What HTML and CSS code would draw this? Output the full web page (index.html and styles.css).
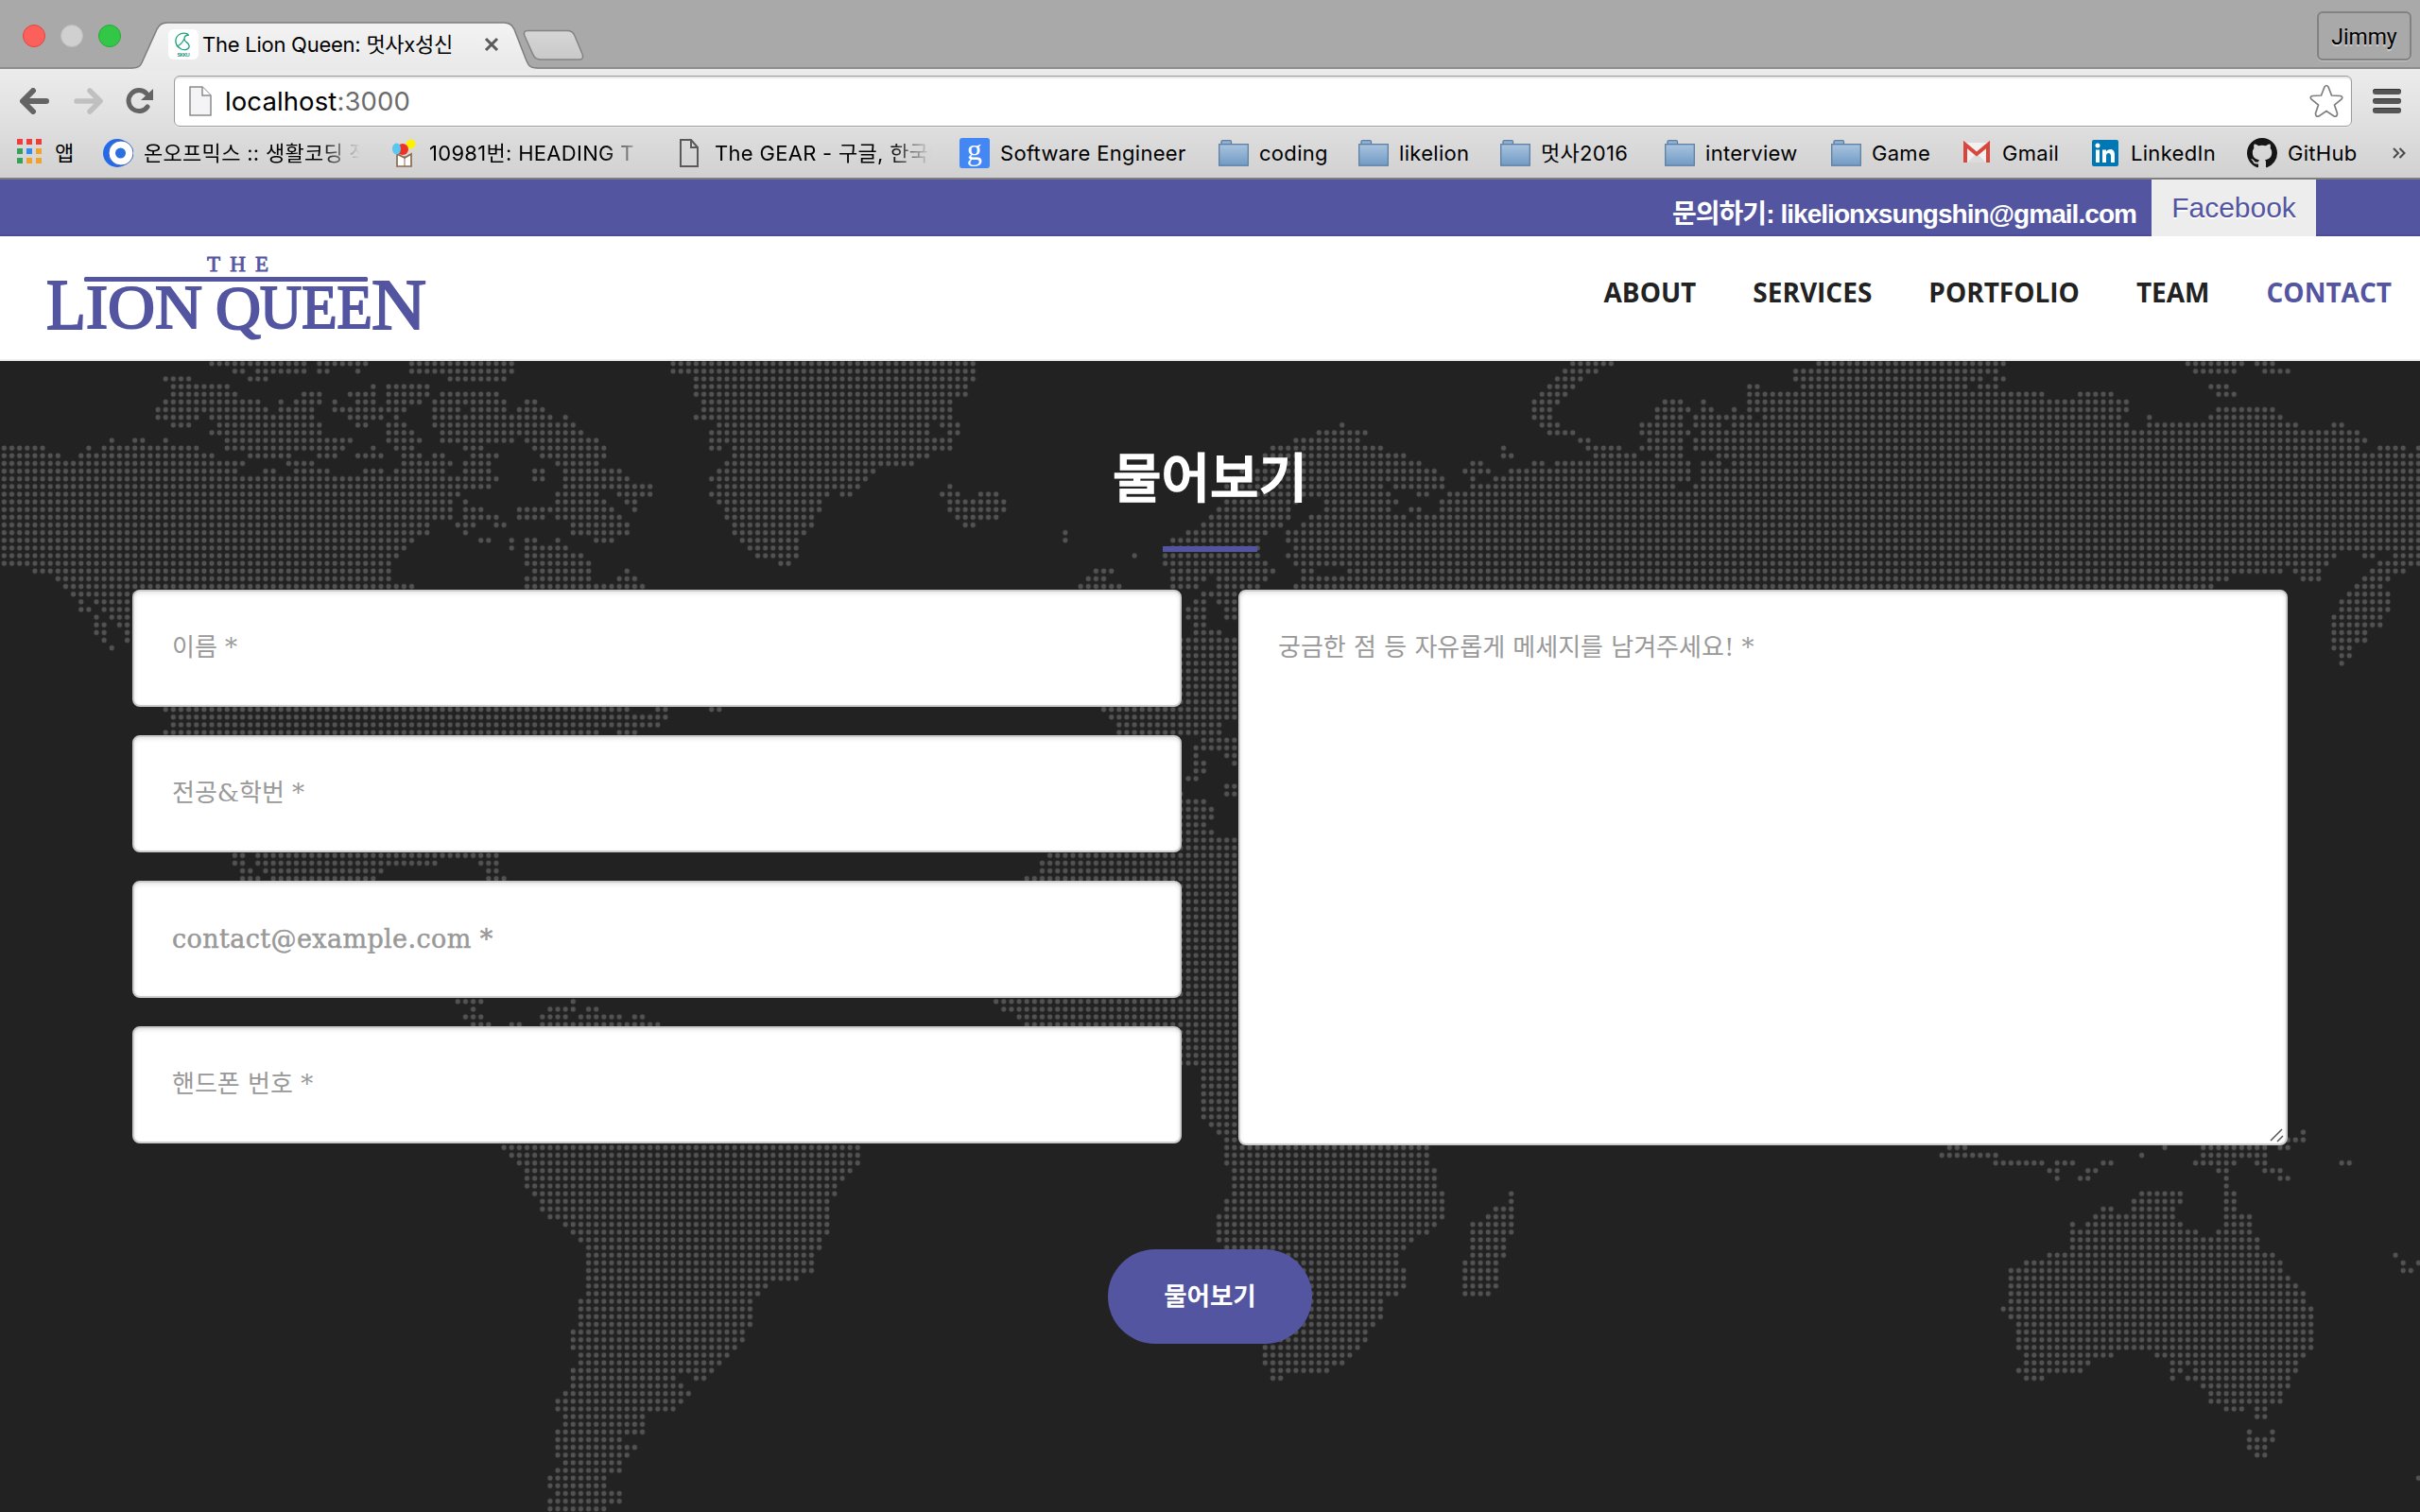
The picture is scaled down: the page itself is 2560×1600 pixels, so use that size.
FILE: index.html
```html
<!DOCTYPE html>
<html lang="ko">
<head>
<meta charset="utf-8">
<title>The Lion Queen: 멋사x성신</title>
<link rel="stylesheet" href="styles.css">
</head>
<body>
<div class="chrome">
  <div class="tabstrip">
    <div class="lights"><i class="light red"></i><i class="light gray"></i><i class="light green"></i></div>
    <div class="tab">
      <svg class="tab-shape" width="480" height="74" viewBox="0 0 480 74">
        <defs>
          <linearGradient id="tabfill" x1="0" y1="0" x2="0" y2="1"><stop offset="0" stop-color="#f3f3f3"/><stop offset="1" stop-color="#e9e9e9"/></linearGradient>
          <linearGradient id="newfill" x1="0" y1="0" x2="0" y2="1"><stop offset="0" stop-color="#d6d6d6"/><stop offset="1" stop-color="#c9c9c9"/></linearGradient>
        </defs>
        <path d="M0 72C8 72 9 69 12 62L26 31Q29 24 37 24H393Q401 24 404 31L416 62C419 69 420 72 428 72V74H0Z" fill="url(#tabfill)"/>
        <path d="M0 72C8 72 9 69 12 62L26 31Q29 24 37 24H393Q401 24 404 31L416 62C419 69 420 72 428 72" fill="none" stroke="#7d7d7d" stroke-width="1.5"/>
        <path d="M418 32.500H460Q466 32.500 468 38L476 57Q478 63 473 63H433Q426 63 424 58L415 38Q413 32.500 418 32.500Z" fill="url(#newfill)" stroke="#838383" stroke-width="1.500"/>
      </svg>
      <div class="tab-content">
        <svg class="favicon" width="32" height="32" viewBox="0 0 32 32"><rect width="32" height="32" rx="6" fill="#fff"/><path d="M21 5C12 2 7 8 8 14c1 5 4 6 6 7 5 2 9-1 8-4-1-4-5-3-5-7 0-3 2-4 5-4M9 18c4-1 6-4 8-8" fill="none" stroke="#1fa37c" stroke-width="1.300"/><text x="16" y="29" text-anchor="middle" textLength="13" class="fav-text">SKKU</text></svg>
        <span class="tab-title">The Lion Queen: 멋사x성신</span>
        <svg width="16" height="16" viewBox="0 0 16 16"><path d="M2 2L14 14M14 2L2 14" stroke="#5a5a5a" stroke-width="3"/></svg>
      </div>
    </div>
    <div class="profile">Jimmy</div>
  </div>

  <div class="toolbar">
    <svg width="32" height="28" viewBox="0 0 32 28"><path d="M28 14H4M14 3L3 14l11 11" fill="none" stroke="#646464" stroke-width="6" stroke-linecap="round" stroke-linejoin="round"/></svg>
    <svg width="32" height="28" viewBox="0 0 32 28"><path d="M4 14H28M18 3l11 11-11 11" fill="none" stroke="#c0c0c0" stroke-width="5.500" stroke-linecap="round" stroke-linejoin="round"/></svg>
    <svg width="30" height="28" viewBox="0 0 30 28"><path d="M23 20A11 11 0 1 1 22 6" fill="none" stroke="#646464" stroke-width="5" stroke-linecap="round"/><path d="M29 1V13H16Z" fill="#646464"/></svg>
    <div class="omnibox">
      <svg width="24" height="32" viewBox="0 0 24 32"><path d="M1 1H14L23 10V31H1Z" fill="#f4f4f6" stroke="#8b8b8b" stroke-width="1.500"/><path d="M14 1V10H23" fill="#fff" stroke="#8b8b8b" stroke-width="1.500"/></svg>
      <span class="url">localhost<span class="port">:3000</span></span>
      <svg class="star" width="36" height="36" viewBox="0 0 36 36"><path d="M16 3Q18 0 20 3L23.500 12 33 12.500Q36 13.500 34 16L26.500 22 29.500 31Q29.500 35 26 34L18 28.500 10 34Q6.500 35 6.500 31L9.500 22 2 16Q0 13.500 3 12.500L12.500 12Z" fill="#fff" stroke="#7f7f7f" stroke-width="1.700"/></svg>
    </div>
    <div class="menu"><i></i><i></i><i></i></div>
  </div>

  <div class="bookmarks">
    <div class="bm"><svg width="32" height="32" viewBox="0 0 32 32"><path d="M3 1h6v6H3zM13 1h6v6h-6zM23 1h6v6h-6z" fill="#f33b3b"/><path d="M3 11h6v6H3zM3 21h6v6H3z" fill="#37a05a"/><path d="M13 11h6v6h-6z" fill="#2e8cf3"/><path d="M23 11h6v6h-6zM13 21h6v6h-6zM23 21h6v6h-6z" fill="#f0a22a"/></svg><span>앱</span></div>
    <div class="bm fade"><svg width="32" height="32" viewBox="0 0 32 32"><circle cx="15" cy="16" r="15" fill="#2469e8"/><circle cx="19" cy="16" r="13" fill="#fff" stroke="#3a66c4"/><circle cx="18.500" cy="16" r="5.500" fill="#2b6fe0"/></svg><span>온오프믹스 :: 생활코딩 작</span></div>
    <div class="bm fade"><svg width="32" height="32" viewBox="0 0 32 32"><path d="M9 17V30H24V17L17 21Z" fill="#fff" stroke="#8b6a4c" stroke-width="1.700"/><path d="M17 19V30" stroke="#8b6a4c"/><circle cx="23.500" cy="6.500" r="5" fill="#fff200"/><circle cx="15" cy="12" r="6" fill="#ee3326"/><ellipse cx="8.500" cy="11.500" rx="4.500" ry="6" fill="#5ac6f2"/></svg><span>10981번: HEADING T</span></div>
    <div class="bm fade"><svg width="32" height="32" viewBox="0 0 32 32"><path d="M7 2H18L25 10V30H7ZM18 2V10H25" fill="none" stroke="#5a5a5a" stroke-width="2"/></svg><span>The GEAR - 구글, 한국어</span></div>
    <div class="bm"><svg width="32" height="32" viewBox="0 0 32 32"><rect width="32" height="32" rx="3" fill="#4387f5"/><text x="16" y="23" text-anchor="middle" class="g-text">g</text></svg><span>Software Engineer</span></div>
    <div class="bm"><svg class="folder" viewBox="0 0 32 28"><use href="#folder"/></svg><span>coding</span></div>
    <div class="bm"><svg class="folder" viewBox="0 0 32 28"><use href="#folder"/></svg><span>likelion</span></div>
    <div class="bm"><svg class="folder" viewBox="0 0 32 28"><use href="#folder"/></svg><span>멋사2016</span></div>
    <div class="bm"><svg class="folder" viewBox="0 0 32 28"><use href="#folder"/></svg><span>interview</span></div>
    <div class="bm"><svg class="folder" viewBox="0 0 32 28"><use href="#folder"/></svg><span>Game</span></div>
    <div class="bm"><svg width="32" height="32" viewBox="0 0 32 32"><path d="M2 5H30V26H2Z" fill="#f1f1f1"/><path d="M6 26L16 16 26 26Z" fill="#dcdcdc"/><path d="M4 26V7L16 17 28 7V26" fill="none" stroke="#d9473c" stroke-width="4"/></svg><span>Gmail</span></div>
    <div class="bm"><svg width="32" height="32" viewBox="0 0 32 32"><rect x="2" y="2" width="28" height="28" rx="2" fill="#0077b5"/><circle cx="8" cy="8" r="2.500" fill="#fff"/><path d="M6 12.500h4V26H6zM13 12.500h4v2c3-4 9-3 9 3V26h-4v-7c0-4-5-4-5 0v7h-4z" fill="#fff"/></svg><span>LinkedIn</span></div>
    <div class="bm"><svg width="32" height="32" viewBox="0 0 16 16"><path fill="#161616" d="M8 0C3.580 0 0 3.580 0 8c0 3.540 2.290 6.530 5.470 7.590.4.070.55-.17.55-.38 0-.19-.01-.82-.01-1.490-2.010.37-2.530-.49-2.690-.94-.09-.23-.48-.94-.82-1.130-.28-.15-.68-.52-.01-.53.63-.01 1.080.58 1.230.82.72 1.210 1.870.87 2.330.66.07-.52.28-.87.51-1.070-1.780-.2-3.640-.89-3.640-3.950 0-.87.31-1.590.82-2.150-.08-.2-.36-1.020.08-2.120 0 0 .67-.21 2.200.82.64-.18 1.320-.27 2-.27s1.360.09 2 .27c1.530-1.040 2.200-.82 2.200-.82.44 1.100.16 1.920.08 2.120.51.56.82 1.270.82 2.150 0 3.070-1.870 3.750-3.650 3.950.29.25.54.73.54 1.480 0 1.070-.01 1.930-.01 2.200 0 .21.15.46.55.38A8.010 8.010 0 0 0 16 8c0-4.420-3.580-8-8-8z"/></svg><span>GitHub</span></div>
    <svg width="14" height="12" viewBox="0 0 14 12"><path d="M1 1l5 5-5 5M7.500 1l5 5-5 5" fill="none" stroke="#4a4a4a" stroke-width="2"/></svg>
  </div>
</div>

<div class="topbar">
  <span class="inquiry">문의하기: likelionxsungshin@gmail.com</span>
  <a class="facebook">Facebook</a>
</div>

<header class="site-header">
  <svg class="logo" width="410" height="100" viewBox="45 265 410 100">
    <text class="the" x="219" y="287" textLength="65">THE</text>
    <rect x="89" y="293" width="300" height="5" rx="1.500"/>
    <text class="big" x="49" y="348" textLength="42" lengthAdjust="spacingAndGlyphs">L</text>
    <text class="mid" x="91" y="347" textLength="123" lengthAdjust="spacingAndGlyphs">ION</text>
    <text class="mid" x="228" y="348" textLength="48" lengthAdjust="spacingAndGlyphs">Q</text>
    <text class="mid" x="275" y="347" textLength="119" lengthAdjust="spacingAndGlyphs">UEE</text>
    <text class="big" x="393" y="348" textLength="58" lengthAdjust="spacingAndGlyphs">N</text>
  </svg>
  <nav><a>ABOUT</a><a>SERVICES</a><a>PORTFOLIO</a><a>TEAM</a><a class="active">CONTACT</a></nav>
</header>

<section class="contact">
  <svg class="map" viewBox="-0.541 -0.332 314.730 149.740" preserveAspectRatio="none">
    <defs><pattern id="dots" x="-.5" y="-.5" width="1" height="1" patternUnits="userSpaceOnUse"><circle cx=".5" cy=".5" r=".32" fill="#525252"/></pattern></defs>
    <path fill="none" stroke="url(#dots)" stroke-width="1" stroke-linecap="square" d="
M27 0H39M41 0H47M53 0H66M87 0H126M204 0H209M236 0H260M284 0H291M293 0H295
M30 1H31M33 1H39M41 1H42M46 1h0M53 1H66M87 1H126M203 1H207M233 1H259M285 1H290M294 1H297
M21 2H24M32 2H34M58 2H65M90 2H126M202 2H205M233 2H257M259 2H260
M22 3H29M48 3h0M50 3H55M90 3H125M201 3H204M227 3H228M234 3H255M257 3H259M287 3H289
M22 4H30M39 4H41M45 4H48M50 4H55M57 4H64M90 4H125M200 4H203M227 4H265M270 4H274M288 4H290
M21 5H33M36 5h0M38 5H41M43 5h0M46 5H48M50 5H54M56 5H65M68 5H69M91 5H123M199 5H202M216 5H218M221 5h0M227 5H276
M20 6H34M36 6H40M43 6H52M56 6H59M61 6H65M67 6H70M91 6H123M199 6H201M215 6H219M221 6H222M225 6h0M227 6H276M288 6H295
M20 7H25M27 7H40M45 7H49M51 7h0M56 7H71M73 7h0M90 7H123M199 7H201M215 7H218M220 7H227M229 7H275M279 7h0M287 7H296
M22 8H24M28 8H41M46 8H47M50 8H52M56 8H74M93 8H120M122 8H124M174 8h0M200 8H202M213 8H218M220 8H223M225 8H276M279 8H298M303 8H304
M27 9H41M50 9H53M57 9H75M92 9H120M123 9H124M171 9H177M201 9H204M213 9H219M221 9H306
M14 10h0M17 10H18M21 10h0M29 10H45M50 10H54M57 10H66M68 10H77M92 10H123M168 10H176M205 10H206M214 10H218M220 10H307
M0 11H5M11 11h0M13 11H25M29 11H44M48 11h0M51 11H53M60 11H62M69 11H78M92 11H93M95 11H123M165 11H179M195 11h0M206 11H210M213 11H218M220 11H306M309 11H312M314 11h0
M0 12H7M10 12H27M32 12H37M41 12H43M46 12H49M52 12H54M56 12H57M61 12H64M70 12H78M95 12H120M164 12H182M195 12H196M207 12H212M215 12H218M223 12H315
M0 13H31M37 13H40M52 13H58M60 13H63M72 13H77M94 13H118M164 13H184M191 13H192M199 13H200M202 13H219M221 13H223M225 13H315
M0 14H30M34 14H35M38 14H42M47 14H49M51 14H57M60 14H63M69 14H70M73 14H80M93 14H113M161 14H186M190 14H193M196 14H219M221 14H315
M0 15H64M69 15H70M73 15H81M92 15H112M160 15H187M191 15h0M194 15H219M221 15H315
M0 16H63M73 16H84M93 16H111M123 16h0M159 16H179M181 16H187M191 16H217M220 16H315
M0 17H59M72 17H77M80 17H84M92 17H107M109 17H110M122 17H124M127 17H129M158 17H180M184 17H185M188 17H315
M0 18H58M60 18h0M72 18H78M81 18H82M93 18H106M123 18H130M159 18H168M172 18H181M187 18H315
M0 19H58M60 19H62M67 19H79M82 19h0M94 19H106M123 19H130M158 19H167M172 19H180M183 19H184M187 19H315
M0 20H58M60 20H64M67 20H70M72 20H80M94 20H105M124 20H129M157 20H167M170 20H182M184 20H315
M0 21H55M59 21H61M64 21H65M74 21H81M95 21H105M125 21H126M156 21H166M169 21H315
M0 22H55M60 22h0M74 22H81M95 22H104M138 22h0M154 22H164M167 22H315
M0 23H53M62 23H63M66 23h0M68 23H69M72 23h0M77 23H79M96 23H103M138 23h0M152 23H163M167 23H315
M0 24H52M66 24h0M68 24H73M97 24H103M152 24H163M168 24H315
M0 25H51M68 25H75M98 25H103M147 25h0M151 25H163M167 25H303M307 25H308M311 25H315
M0 26H50M68 26H76M101 26H102M151 26H164M168 26H302M309 26H315
M4 27H50M69 27H76M81 27h0M142 27H144M152 27H165M169 27H170M175 27H296M298 27H301M308 27H312
M7 28H50M68 28H76M80 28H82M141 28H143M152 28H156M158 28H164M169 28H289M299 28H301M307 28H310
M8 29H53M68 29H83M140 29H145M152 29H155M158 29H163M168 29H287M306 29H309
M9 30H17M156 30H161M305 30H310
M10 31h0M12 31H17M155 31H156M158 31H161M304 31H310
M10 32H11M13 32H17M154 32H156M159 32H161M304 32H310
M12 33h0M14 33H17M154 33H156M159 33H161M303 33H309
M12 34H13M15 34H17M155 34H156M303 34H309
M12 35H13M16 35H17M155 35H158M303 35H307
M13 36h0M16 36h0M153 36H161M303 36H307
M14 37h0M153 37H161M303 37H305
M153 38H161M304 38H305
M153 39H161M304 39h0
M153 40H161M153 41H161M153 42H161M153 43H161M153 44H161
M21 45H81M85 45H86M92 45H93M143 45H161
M22 46H86M144 46H161
M22 47H85M145 47H158
M21 48H77M80 48H82M145 48H158
M156 49H161M155 50H161M155 51h0M159 51H161M155 52H156M160 52h0M155 53H156M154 54H155
M159 55H161M153 56h0M159 56H161M153 57H156M153 58H157M153 59H157M153 60H156M153 61H157M153 62H161M153 63H161
M30 64H31M33 64H64M136 64H161
M30 65H31M33 65H56M62 65H64M135 65H161
M31 66H32M34 66H49M63 66H64M135 66H161
M31 67H33M35 67H48M63 67H65M133 67H161
M153 68H161M153 69H161M153 70H161M153 71H161M153 72H161M153 73H161M153 74H161M153 75H161M153 76H161M153 77H161M153 78H161M153 79H161M153 80H161M153 81H161M153 82H161
M59 83H62M74 83h0M129 83H161
M61 84h0M71 84H74M76 84H77M130 84H161
M60 85H62M70 85H73M75 85H80M82 85H83M132 85H161
M61 86H63M66 86H67M70 86H85M133 86H161
M153 87H161M153 88H161M153 89H161M153 90H161M153 91H161M156 92H161M156 93H161M156 94H161M156 95H161M156 96H161M156 97H161M156 98H161M157 99H161
M158 100H161M299 100h0M159 101H161M297 101H299
M65 102H111M159 102H185M253 102H255M281 102h0M286 102H294M296 102H297
M66 103H111M159 103H185M252 103H259M278 103h0M286 103H294
M67 104H111M159 104H185M259 104H265M267 104H269M273 104H274M285 104H290M293 104H294M304 104H305
M68 105H110M160 105H186M266 105H267M271 105H272M288 105H289M294 105H296
M68 106H109M160 106H186M267 106h0M270 106H271M289 106h0M296 106H297
M68 107H108M160 107H186M289 107h0
M69 108H108M160 108H187M196 108h0M278 108H283M289 108H290
M70 109H107M159 109H187M196 109h0M277 109H283M289 109H290
M70 110H107M159 110H187M194 110H196M273 110H274M277 110H282M289 110H290
M71 111H107M158 111H187M193 111H196M272 111H282M289 111H292
M73 112H107M158 112H186M191 112H196M269 112h0M271 112H283M289 112H292
M74 113H107M158 113H185M191 113H196M269 113H285M288 113H292
M75 114H106M158 114H183M191 114H195M269 114H293
M76 115H106M159 115H182M191 115H195M269 115H293
M76 116H105M162 116H181M191 116H195M266 116H295M311 116h0
M76 117H105M162 117H181M190 117H194M263 117H296M312 117h0M314 117h0
M76 118H105M162 118H182M190 118H194M261 118H296M312 118H313
M76 119H103M162 119H182M190 119H194M261 119H297
M76 120H99M162 120H182M190 120H194M261 120H298
M76 121H98M162 121H181M190 121H193M261 121H299
M75 122H97M162 122H179M261 122H299
M75 123H97M162 123H179M260 123H300
M75 124H97M162 124H179M261 124H300
M75 125H97M163 125H178M262 125H300
M74 126H96M163 126H177M262 126H300
M74 127H96M163 127H177M262 127H300
M74 128H95M164 128H176M262 128H300
M75 129H94M164 129H175M263 129H274M280 129H299
M75 130H93M164 130H174M263 130H271M282 130H298
M74 131H92M165 131H172M262 131H270M282 131H283M285 131H298
M74 132H87M90 132H91M165 132H166M263 132H265M282 132h0M284 132H297
M74 133H88M286 133H297M73 134H89M287 134H296M72 135H88M287 135H296
M72 136H87M289 136H291M293 136H294M73 137H83M293 137H294M73 138H83
M72 139H83M292 139h0M295 139h0M72 140H80M292 140H295M72 141H82M292 141H294M72 142H81M293 142H294
M73 143H80M72 144H80M71 145H78M314 145h0M71 146H78M72 147H80M71 148H80M71 149H78"/>
  </svg>
  <div class="contact-body">
    <h2>물어보기</h2>
    <div class="rule"></div>
    <form>
      <div class="fields">
        <input placeholder="이름 *">
        <input placeholder="전공&amp;학번 *">
        <input class="latin" placeholder="contact@example.com *">
        <input placeholder="핸드폰 번호 *">
      </div>
      <div class="message">
        <textarea placeholder="궁금한 점 등 자유롭게 메세지를 남겨주세요! *"></textarea>
        <svg class="grip" width="16" height="16" viewBox="0 0 16 16"><path d="M1 14L13 2M8 15L14 9" stroke="#555" stroke-width="1.500"/></svg>
      </div>
      <button type="button">물어보기</button>
    </form>
  </div>
</section>

<svg width="0" height="0" class="defs">
  <defs>
    <linearGradient id="ff" x1="0" y1="0" x2="0" y2="1"><stop offset="0" stop-color="#a9c4df"/><stop offset="1" stop-color="#719ac4"/></linearGradient>
    <g id="folder"><path d="M3 5V2Q3 .7 4.500.7H12Q13.500.7 13.500 2V5" fill="#8fb0d2" stroke="#5d7fa3" stroke-width="1.300"/><rect x=".7" y="4.700" width="30.600" height="22.500" fill="url(#ff)" stroke="#5d7fa3" stroke-width="1.300"/></g>
  </defs>
</svg>
</body>
</html>
```
FILE: styles.css
```css
* { box-sizing: border-box; }
body {
  margin: 0;
  width: 2560px;
  height: 1600px;
  overflow: hidden;
  background: #222;
  font-family: "Liberation Sans", "Noto Sans CJK KR", sans-serif;
}
svg { display: block; flex: none; }
.defs { position: absolute; }

/* browser window */
.chrome {
  height: 190px;
  font-family: Inter, "Noto Sans CJK KR", sans-serif;
  background: linear-gradient(#ececec 72px, #e2e2e2 120px, #d1d1d1 188px);
  border-bottom: 2px solid #7e7e7e;
}
.tabstrip {
  height: 73px;
  display: flex;
  align-items: flex-start;
  background: #a9a9a9;
  border-bottom: 2px solid #8d8d8d;
}
.lights { display: flex; gap: 16px; padding: 26px 0 0 24px; width: 140px; }
.light { width: 24px; height: 24px; border-radius: 50%; }
.red { background: #fc605b; border: 1px solid #e2453f; }
.gray { background: #d0d0d0; border: 1px solid #bdbdbd; }
.green { background: #33c748; border: 1px solid #27a936; }
.tab { position: relative; width: 480px; height: 73px; }
.tab-shape { position: absolute; left: 0; top: 0; }
.tab-content {
  position: relative;
  display: flex;
  align-items: center;
  padding: 31px 0 0 38px;
}
.tab-title { margin-left: 4px; width: 298px; height: 32px; font-size: 22px; line-height: 33px; white-space: nowrap; letter-spacing: -.25px; }
.fav-text { font: bold 5px "Liberation Sans", sans-serif; fill: #1b8d78; }
.profile {
  margin: 12px 9px 0 auto;
  width: 100px;
  height: 52px;
  border: 2px solid #828282;
  border-radius: 6px;
  box-shadow: 0 1px 1px #c4c4c4;
  font: 23px/51px Roboto, sans-serif;
  text-align: center;
  text-shadow: 0 2px 1px #d0d0d0;
}
.toolbar { display: flex; align-items: center; height: 68px; padding: 0 0 0 21px; }
.toolbar > svg { margin-right: 24px; }
.toolbar > svg:nth-child(3) { margin-right: 21px; }
.omnibox {
  display: flex;
  align-items: center;
  width: 2304px;
  height: 54px;
  padding: 0 8px 0 15px;
  background: #fff;
  border: 1.500px solid #9c9c9c;
  border-radius: 6px;
  box-shadow: inset 0 2px 1px #e6e6e6, 0 1px 0 #eee;
}
.url { margin-left: 14px; font-size: 27.500px; letter-spacing: .1px; }
.port { color: #6b6b6b; }
.star { margin-left: auto; }
.menu { display: flex; flex-direction: column; gap: 4px; margin-left: 22px; }
.menu i { width: 30px; height: 6px; border-radius: 3px; background: #555; box-shadow: inset 0 1px #333; }
.bookmarks { display: flex; align-items: center; height: 42px; padding-left: 15px; font-size: 22px; letter-spacing: .3px; }
.bm { display: flex; align-items: center; gap: 11px; width: 154px; white-space: nowrap; }
.bm:nth-child(1) { width: 94px; }
.bm:nth-child(-n+4):nth-child(n+2) { width: 302px; }
.bm:nth-child(5) { width: 274px; }
.bm:nth-child(6) { width: 148px; }
.bm:nth-child(7) { width: 150px; }
.bm:nth-child(8) { width: 174px; }
.bm:nth-child(9) { width: 176px; }
.bm:nth-child(10) { width: 138px; }
.bm:nth-child(11) { width: 136px; }
.bm:nth-child(12) { width: 166px; }
.bm span { line-height: 34px; }
.fade span {
  width: 229px;
  overflow: hidden;
  -webkit-mask-image: linear-gradient(90deg, #000 185px, transparent 229px);
  mask-image: linear-gradient(90deg, #000 185px, transparent 229px);
}
.folder { width: 32px; height: 28px; }
.g-text { font: 32px "Liberation Serif", serif; fill: #fff; }

/* site */
.topbar {
  display: flex;
  justify-content: flex-end;
  height: 60px;
  padding-right: 110px;
  background: #5355a0;
  box-shadow: inset 0 -2px #4c4c98;
}
.inquiry { margin-right: 16px; color: #fff; font-size: 28px; font-weight: bold; line-height: 73px; letter-spacing: -.95px; white-space: nowrap; }
.facebook { width: 174px; background: #ededed; color: #5355a0; font-size: 30px; line-height: 59px; text-align: center; text-shadow: 0 2px 1px #fff; }
.site-header {
  display: flex;
  justify-content: space-between;
  height: 132px;
  padding: 15px 30px 0 45px;
  background: #fff;
  border-bottom: 2px solid #ededed;
}
.logo { fill: #5355a0; font-family: "Liberation Serif", serif; }
.the { font-size: 23px; stroke: #5355a0; stroke-width: .8px; }
.mid { font-size: 65px; stroke: #5355a0; stroke-width: 2px; }
.big { font-size: 77px; stroke: #5355a0; stroke-width: 2px; }
nav { display: flex; gap: 60px; font: bold 28px/89px "Open Sans", sans-serif; color: #222; }
.active { color: #5355a0; }

.contact { position: relative; height: 1218px; background: #222; }
.map { position: absolute; inset: 0; width: 2560px; height: 1218px; }
.contact-body { position: relative; padding: 87px 140px 0; font-family: "Noto Sans CJK KR", sans-serif; }
h2 { margin: 0; height: 109px; color: #fff; text-align: center; font-size: 56px; line-height: 66px; font-weight: 500; -webkit-text-stroke: 1.500px #fff; }
.rule { width: 100px; height: 6px; margin: 0 auto 40px; background: #5355a0; }
form { display: grid; grid-template-columns: 1110px 1110px; column-gap: 60px; }
.fields { display: grid; gap: 30px; align-content: start; }
input, textarea {
  display: block;
  width: 1110px;
  height: 124px;
  padding: 0 40px 2px;
  background: #fff;
  border: 2px solid #ccc;
  border-radius: 8px;
  box-shadow: inset 0 2px 4px rgba(0, 0, 0, .1);
  font: 26px/34px "DejaVu Serif", "Noto Sans CJK KR", serif;
  outline: none;
}
textarea { height: 588px; padding-top: 42px; resize: none; }
::placeholder { color: #999; opacity: 1; }
.latin { font-size: 27px; letter-spacing: .4px; -webkit-text-stroke: .500px #999; }
.message { position: relative; }
.grip { position: absolute; right: 3px; top: 569px; }
button {
  grid-column: 1 / -1;
  justify-self: center;
  width: 216px;
  height: 100px;
  margin-top: 110px;
  padding: 0 0 5px;
  border: 0;
  border-radius: 50px;
  background: #5355a0;
  color: #fff;
  font: bold 26.500px "Noto Sans CJK KR", sans-serif;
}
```
